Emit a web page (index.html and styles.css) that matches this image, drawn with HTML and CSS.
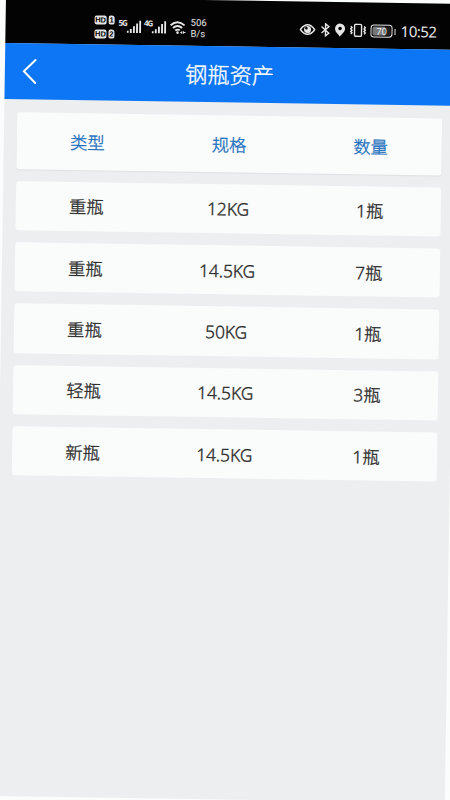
FILE: index.html
```html
<!DOCTYPE html>
<html lang="zh-CN">
<head>
<meta charset="utf-8">
<title>钢瓶资产</title>
<link rel="stylesheet" href="styles.css">
</head>
<body>
<main class="screen">
  <div class="status">
    <div class="status-left">
      <div class="sims">
        <div class="sim"><span class="hd">HD</span><span class="slot">1</span></div>
        <div class="sim"><span class="hd">HD</span><span class="slot">2</span></div>
      </div>
      <div class="network">
        <span class="gen">5G</span>
        <svg class="bars" viewBox="0 0 15 14"><path d="M1.2 11v2M4.3 9v4M7.4 6.3v6.7M10.5 3.6V13M13.6 .8V13"/></svg>
      </div>
      <div class="network">
        <span class="gen">4G</span>
        <svg class="bars" viewBox="0 0 15 14"><path d="M1.2 11v2M4.3 9v4M7.4 6.3v6.7M10.5 3.6V13M13.6 .8V13"/></svg>
      </div>
      <svg class="wifi" viewBox="0 0 17 14"><path d="M1 4.7Q8 -1.6 15 4.7M3.4 7.4Q8 3.4 12.6 7.4M5.7 10Q8 8.2 10.3 9.6"/><circle cx="8" cy="12" r="1.3"/><path class="fine" d="M10.8 11.8h2M12.3 10.5v2.6M14 10.5v2.6M14 11.8h2"/></svg>
      <div class="speed"><span>506</span><span>B/s</span></div>
    </div>
    <div class="status-right">
      <svg class="eye" viewBox="0 0 16 12"><path d="M.8 6Q8-3.5 15.2 6Q8 15.5.8 6Z"/><circle cx="8" cy="6" r="3.5"/><circle class="glint" cx="6.8" cy="4.6" r="1.3"/></svg>
      <svg class="bt" viewBox="0 0 10 14"><path d="M1 3.8L8.3 10.3L5 13V1L8.3 3.8L1 10.3"/></svg>
      <svg class="pin" viewBox="0 0 11 14"><path fill-rule="evenodd" d="M5.5.4A5 5 0 0 0 .5 5.4C.5 9 3.7 10.8 5.5 13.6C7.3 10.8 10.5 9 10.5 5.4A5 5 0 0 0 5.5.4ZM5.5 3.6A1.8 1.8 0 1 1 5.5 7.2A1.8 1.8 0 0 1 5.5 3.6Z"/></svg>
      <svg class="vibrate" viewBox="0 0 17 14"><rect x="5" y="1" width="7" height="12" rx="1.2"/><path d="M1.2 3l1.3 1.2L1.2 5.6l1.3 1.3L1.2 8.2l1.3 1.3L1.2 10.8M14.5 3l1.3 1.2L14.5 5.6l1.3 1.3-1.3 1.3 1.3 1.3-1.3 1.3"/></svg>
      <div class="battery"><span class="charge">70</span></div>
      <span class="clock">10:52</span>
    </div>
  </div>
  <header class="bar">
    <svg class="back" viewBox="0 0 16 26"><path d="M13.5 1.5L2 13L13.5 24.5"/></svg>
    <h1>钢瓶资产</h1>
  </header>
  <section class="list">
    <div class="row head"><span>类型</span><span>规格</span><span>数量</span></div>
    <div class="row"><span>重瓶</span><span>12KG</span><span>1瓶</span></div>
    <div class="row"><span>重瓶</span><span>14.5KG</span><span>7瓶</span></div>
    <div class="row"><span>重瓶</span><span>50KG</span><span>1瓶</span></div>
    <div class="row"><span>轻瓶</span><span>14.5KG</span><span>3瓶</span></div>
    <div class="row"><span>新瓶</span><span>14.5KG</span><span>1瓶</span></div>
  </section>
</main>
</body>
</html>
```
FILE: styles.css
```css
* { box-sizing: border-box; }
html, body { height: 100%; }
body {
  display: flow-root;
  margin: 0;
  overflow: hidden;
  background: #fbfcfc;
  font-family: "Noto Sans", "Noto Sans CJK SC", sans-serif;
}
.screen {
  width: 450.5px;
  height: 799px;
  margin: -2.6px 0 0 6px;
  background: #edeef0;
  transform: rotate(.87deg);
  transform-origin: 0 0;
}

.status {
  height: 46px;
  padding: 10px 19.5px 0 89px;
  display: flex;
  align-items: center;
  justify-content: space-between;
  background: #030303;
  color: #e6e6e6;
}
.status svg { display: block; flex: none; fill: none; stroke: #e6e6e6; }
.status-left, .status-right { display: flex; align-items: center; }
.sims { display: flex; flex-direction: column; gap: 5px; margin-right: 4px; }
.sim { display: flex; gap: 2px; }
.hd, .slot {
  height: 9px;
  border-radius: 2px;
  background: #e6e6e6;
  color: #030303;
  font: 700 7.5px/9px "Liberation Sans", sans-serif;
  text-align: center;
}
.hd { width: 12px; }
.slot { width: 6px; border-top-right-radius: 3px; }
.network { display: flex; align-items: flex-start; margin-right: 3px; }
.gen { width: 7.5px; margin-top: -1px; font: 700 8px/8px "Liberation Sans Narrow", "Open Sans", sans-serif; letter-spacing: -1.2px; }
.bars { width: 15px; height: 14px; stroke-width: 1.9; }
.wifi { width: 17px; height: 14px; margin-right: 4px; stroke-width: 1.9; }
.wifi circle { fill: #e6e6e6; stroke: none; }
.wifi .fine { stroke-width: 1; }
.speed { display: flex; flex-direction: column; font: 9.5px/11px Roboto, sans-serif; }

.eye { width: 16px; height: 12px; margin-right: 4.5px; stroke-width: 1.5; }
.status .eye circle { fill: #e6e6e6; stroke: none; }
.status .eye .glint { fill: #030303; }
.bt { width: 10px; height: 14px; margin-right: 4.5px; stroke-width: 1.4; }
.status .pin { width: 11px; height: 14px; margin-right: 4px; fill: #e6e6e6; stroke: none; }
.vibrate { width: 17px; height: 14px; margin-right: 4px; stroke-width: 1.4; }
.battery {
  position: relative;
  width: 22px;
  height: 13px;
  margin-right: 8px;
  padding: 1px;
  border: 1px solid #e6e6e6;
  border-radius: 3.5px;
}
.battery::after {
  content: "";
  position: absolute;
  right: -4px;
  top: 3px;
  width: 1.5px;
  height: 6px;
  background: #e6e6e6;
}
.charge {
  display: block;
  height: 9px;
  border-radius: 2px;
  background: linear-gradient(90deg, #777 70%, #222 70%);
  color: #f2f2f2;
  font: 9.5px/9px Roboto, sans-serif;
  text-align: center;
}
.clock { font: 15px/18px "Noto Sans", sans-serif; letter-spacing: -.5px; }

.bar {
  height: 56px;
  display: grid;
  grid-template-columns: 48px 1fr 48px;
  align-items: center;
  background: #0d76f4;
  color: #fff;
}
.back { width: 16px; height: 26px; margin: 0 0 0 17px; fill: none; stroke: #fff; stroke-width: 2; stroke-linecap: round; }
.bar h1 {
  margin: 2px 1px 0 0;
  text-align: center;
  font-size: 22.2px;
  line-height: 30px;
  font-weight: 300;
  -webkit-text-stroke: .35px currentColor;
}

.list { padding: 12.6px 12.7px 0 12.7px; }
.row {
  height: 49.2px;
  margin-bottom: 12.1px;
  padding-top: 2px;
  display: grid;
  grid-template-columns: repeat(3, 1fr);
  align-items: center;
  justify-items: center;
  border-radius: 3px;
  background: #fafbfb;
  color: #2b2b2b;
  font-size: 17.3px;
  font-weight: 300;
  line-height: 24px;
  -webkit-text-stroke: .35px currentColor;
}
.head { height: 57px; margin-bottom: 12.3px; padding-top: 3px; color: #1c6fbd; box-shadow: 0 1px 1px #dfe0e2; }
```
